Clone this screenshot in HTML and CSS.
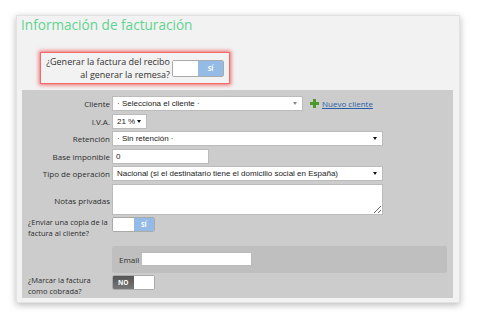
FILE: index.html
```html
<html>
<head>
<meta http-equiv="Content-Type" content="text/html; charset=UTF-8" />
<title>Información de facturación</title>
<link rel="stylesheet" href="styles.css">
</head>
<body>

<div class="panel">
  <h2 class="title">Información de facturación</h2>

  <div class="generar">
    <span class="generar-label">¿Generar la factura del recibo<br>al generar la remesa?</span>
    <span class="toggle big"><span class="off-part"></span><span class="on-part">SÍ</span></span>
  </div>

  <div class="fields">
    <label class="lbl">Cliente</label>
    <div class="ctl">
      <span class="sel w-cliente grey-arrow">· Selecciona el cliente ·</span>
      <a class="nuevo" href="#"><span class="plus"></span>Nuevo cliente</a>
    </div>

    <label class="lbl">I.V.A.</label>
    <div class="ctl"><span class="sel w-iva">21 %</span></div>

    <label class="lbl">Retención</label>
    <div class="ctl"><span class="sel w-full">· Sin retención ·</span></div>

    <label class="lbl">Base imponible</label>
    <div class="ctl"><input class="inp w-base" type="text" value="0"></div>

    <label class="lbl">Tipo de operación</label>
    <div class="ctl"><span class="sel w-full">Nacional (si el destinatario tiene el domicilio social en España)</span></div>

    <label class="lbl notas-lbl">Notas privadas</label>
    <div class="ctl tall"><textarea class="notas"></textarea></div>

    <label class="lbl left">¿Enviar una copia de la factura al cliente?</label>
    <div class="ctl top"><span class="toggle"><span class="off-part"></span><span class="on-part">SÍ</span></span></div>

    <span></span>
    <div class="email-box">
      <label class="email-lbl">Email</label>
      <input class="inp w-email" type="text">
    </div>

    <label class="lbl left">¿Marcar la factura como cobrada?</label>
    <div class="ctl top"><span class="toggle"><span class="no-part">NO</span><span class="off-part"></span></span></div>
  </div>
</div>

</body>
</html>
```

FILE: styles.css
```css
body {
	margin: 0;
	padding: 0;
	background: #FFF;
	font-family: "Open Sans", Arial, sans-serif;
	color: #333;
}

.panel {
	margin: 15px 0 0 16px;
	width: 442px;
	height: 286px;
	background: #F2F2F2;
	border: 1px solid #E2E2E2;
	box-shadow: 0 2px 7px rgba(0,0,0,0.28);
}

.title {
	margin: 0;
	padding: 0 0 0 4px;
	font-size: 13.6px;
	line-height: 18px;
	font-weight: normal;
	color: #62D390;
}

.generar {
	display: flex;
	align-items: center;
	justify-content: flex-end;
	margin: 18px 0 0 23px;
	width: 183px;
	height: 30px;
	padding-right: 5px;
	background: #F2F2F2;
	border: 1px solid #F46A6A;
	box-shadow: 0 0 4px 1px rgba(240,60,60,0.75);
}

.generar-label {
	text-align: right;
	font-size: 9px;
	line-height: 13px;
	color: #333;
	margin-right: 2px;
}

.toggle {
	display: flex;
	width: 41px;
	height: 13px;
	border: 1px solid #AAA;
	border-radius: 2px;
	overflow: hidden;
	background: #FFF;
}

.toggle.big {
	width: 50px;
	height: 15px;
}

.off-part {
	flex: 1;
	background: #FFF;
}

.on-part, .no-part {
	flex: 1;
	display: flex;
	align-items: center;
	justify-content: center;
	font-size: 6.5px;
	font-weight: bold;
	color: #FFF;
}

.on-part {
	background: #94BBE6;
}

.no-part {
	background: linear-gradient(#555, #777);
}

.fields {
	display: grid;
	grid-template-columns: 82px 1fr;
	column-gap: 2px;
	row-gap: 1.5px;
	margin: 6px 0 0 5px;
	width: 419px;
	height: 202px;
	padding: 6px 6px 0 6px;
	background: #CCC;
}

.lbl {
	text-align: right;
	font-size: 8px;
	line-height: 15px;
	color: #2E2E2E;
}

.lbl.left {
	text-align: left;
	font-size: 7.5px;
	line-height: 11px;
}

.notas-lbl {
	padding-top: 9px;
}

.ctl {
	display: flex;
	align-items: center;
	height: 15px;
}

.ctl.tall {
	height: 31px;
}

.ctl.top {
	align-items: flex-start;
}

.sel {
	position: relative;
	display: block;
	box-sizing: border-box;
	height: 15px;
	padding: 0 12px 0 4px;
	background: #FFF;
	border: 1px solid #BBB;
	font-family: Arial, "Liberation Sans", sans-serif;
	font-size: 8px;
	line-height: 13px;
	color: #222;
	white-space: nowrap;
	overflow: hidden;
}

.sel::after {
	content: "";
	position: absolute;
	right: 5px;
	top: 5px;
	border-left: 2px solid transparent;
	border-right: 2px solid transparent;
	border-top: 3px solid #111;
}

.sel.grey-arrow::after {
	border-top-color: #888;
}

.w-cliente { width: 191px; }
.w-iva { width: 35px; }
.w-full { width: 271px; }

.inp {
	box-sizing: border-box;
	height: 15px;
	margin: 0;
	padding: 0 3px;
	border: 1px solid #BBB;
	background: #FFF;
	font-family: Arial, "Liberation Sans", sans-serif;
	font-size: 8px;
	color: #222;
	outline: none;
}

.w-base { width: 97px; }
.w-email { width: 111px; height: 14px; }

.notas {
	box-sizing: border-box;
	width: 271px;
	height: 31px;
	margin: 0;
	border: 1px solid #BBB;
	background: #FFF;
	resize: vertical;
}

.nuevo {
	display: flex;
	align-items: center;
	margin-left: 7px;
	font-family: "Open Sans", Arial, sans-serif;
	font-size: 8px;
	color: #2A5FA8;
	text-decoration: underline;
}

.plus {
	position: relative;
	width: 9px;
	height: 9px;
	margin-right: 3px;
}

.plus::before, .plus::after {
	content: "";
	position: absolute;
	background: #4C9A2A;
}

.plus::before {
	left: 3px;
	top: 0;
	width: 3px;
	height: 9px;
}

.plus::after {
	left: 0;
	top: 3px;
	width: 9px;
	height: 3px;
}

.email-box {
	display: flex;
	align-items: center;
	margin: 4px 0 0 0;
	width: 335px;
	height: 27px;
	background: #BFBFBF;
	border-radius: 3px;
}

.email-lbl {
	margin: 0 2px 0 7px;
	font-size: 8px;
	color: #333;
}
```
